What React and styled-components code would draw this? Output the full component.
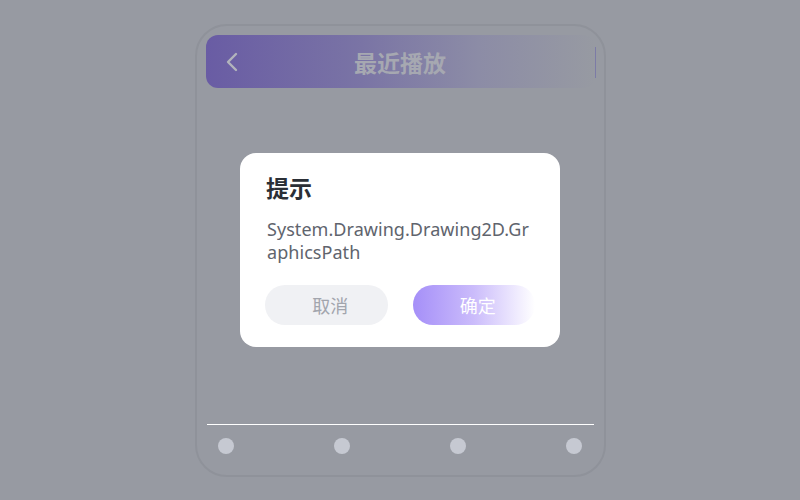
import React from "react";
import styled, { createGlobalStyle } from "styled-components";

const Global = createGlobalStyle`
  html, body { margin: 0; padding: 0; }
  body {
    background: #979aa2;
    font-family: "Noto Sans", "Noto Sans CJK SC", sans-serif;
    width: 800px;
    height: 500px;
    overflow: hidden;
  }
`;

const Screen = styled.div`
  width: 800px;
  height: 500px;
  padding-top: 24px;
  box-sizing: border-box;
`;

const Frame = styled.div`
  width: 411px;
  height: 453px;
  margin: 0 auto;
  box-sizing: border-box;
  border: 2px solid #8f929a;
  border-radius: 32px;
  padding: 9px 9px 0 9px;
  display: flex;
  flex-direction: column;
`;

const Header = styled.div`
  height: 53px;
  border-radius: 12px;
  background: linear-gradient(90deg, #695ca4 0%, #7a74a5 40%, #8c8ca6 70%, #979aa2 100%);
  display: flex;
  align-items: center;
  position: relative;
  padding: 0 20px;
`;

const Back = styled.svg`
  width: 12px;
  height: 20px;
  flex: none;
`;

const Title = styled.div`
  flex: 1;
  text-align: center;
  font-size: 23px;
  font-weight: 700;
  color: #a6a8b1;
  margin-right: 12px;
  font-family: "Noto Sans CJK SC", sans-serif;
`;

const EdgeLine = styled.div`
  position: absolute;
  right: -1px;
  top: 12px;
  width: 1px;
  height: 31px;
  background: #7c7ba6;
`;

const Spacer = styled.div`
  flex: 1;
`;

const Divider = styled.div`
  height: 1px;
  background: #ffffff;
  margin: 0 1px;
`;

const Dots = styled.div`
  display: flex;
  justify-content: space-between;
  padding: 13px 12px 0 12px;
  height: 50px;
  box-sizing: border-box;
`;

const Dot = styled.div`
  width: 16px;
  height: 16px;
  border-radius: 50%;
  background: #c6c9d2;
`;

const Overlay = styled.div`
  position: fixed;
  inset: 0;
  display: flex;
  align-items: center;
  justify-content: center;
`;

const Dialog = styled.div`
  width: 320px;
  height: 194px;
  box-sizing: border-box;
  background: #ffffff;
  border-radius: 16px;
  padding: 18px 25px 22px 26px;
  display: flex;
  flex-direction: column;
`;

const DTitle = styled.div`
  font-family: "Noto Sans CJK SC", sans-serif;
  font-size: 23px;
  font-weight: 700;
  color: #2b2f36;
  line-height: 32px;
`;

const DBody = styled.div`
  margin-top: 15px;
  font-size: 18px;
  letter-spacing: 0.05px;
  line-height: 23px;
  color: #60646d;
  word-break: break-all;
  padding-left: 1px;
`;

const Buttons = styled.div`
  margin-top: auto;
  display: flex;
  gap: 25px;
  margin-left: -1px;
`;

const Btn = styled.div`
  flex: 1;
  height: 40px;
  border-radius: 20px;
  display: flex;
  align-items: center;
  justify-content: center;
  padding-left: 8px;
  font-family: "Noto Sans CJK SC", sans-serif;
  font-size: 18px;
  background: ${(p) => (p.$primary ? "linear-gradient(90deg, #a58ff8 0%, #cbbcfb 50%, #ffffff 100%)" : "#f0f1f4")};
  color: ${(p) => (p.$primary ? "#ffffff" : "#a2a5ad")};
`;

export default function App() {
  return (
    <>
      <Global />
      <Screen>
        <Frame>
          <Header>
            <Back viewBox="0 0 12 20">
              <polyline points="10,2 2,10 10,18" fill="none" stroke="#b2b4bc" strokeWidth="2.4" strokeLinecap="round" strokeLinejoin="round" />
            </Back>
            <Title>最近播放</Title>
            <EdgeLine />
          </Header>
          <Spacer />
          <Divider />
          <Dots>
            <Dot />
            <Dot />
            <Dot />
            <Dot />
          </Dots>
        </Frame>
      </Screen>
      <Overlay>
        <Dialog>
          <DTitle>提示</DTitle>
          <DBody>System.Drawing.Drawing2D.GraphicsPath</DBody>
          <Buttons>
            <Btn>取消</Btn>
            <Btn $primary>确定</Btn>
          </Buttons>
        </Dialog>
      </Overlay>
    </>
  );
}
